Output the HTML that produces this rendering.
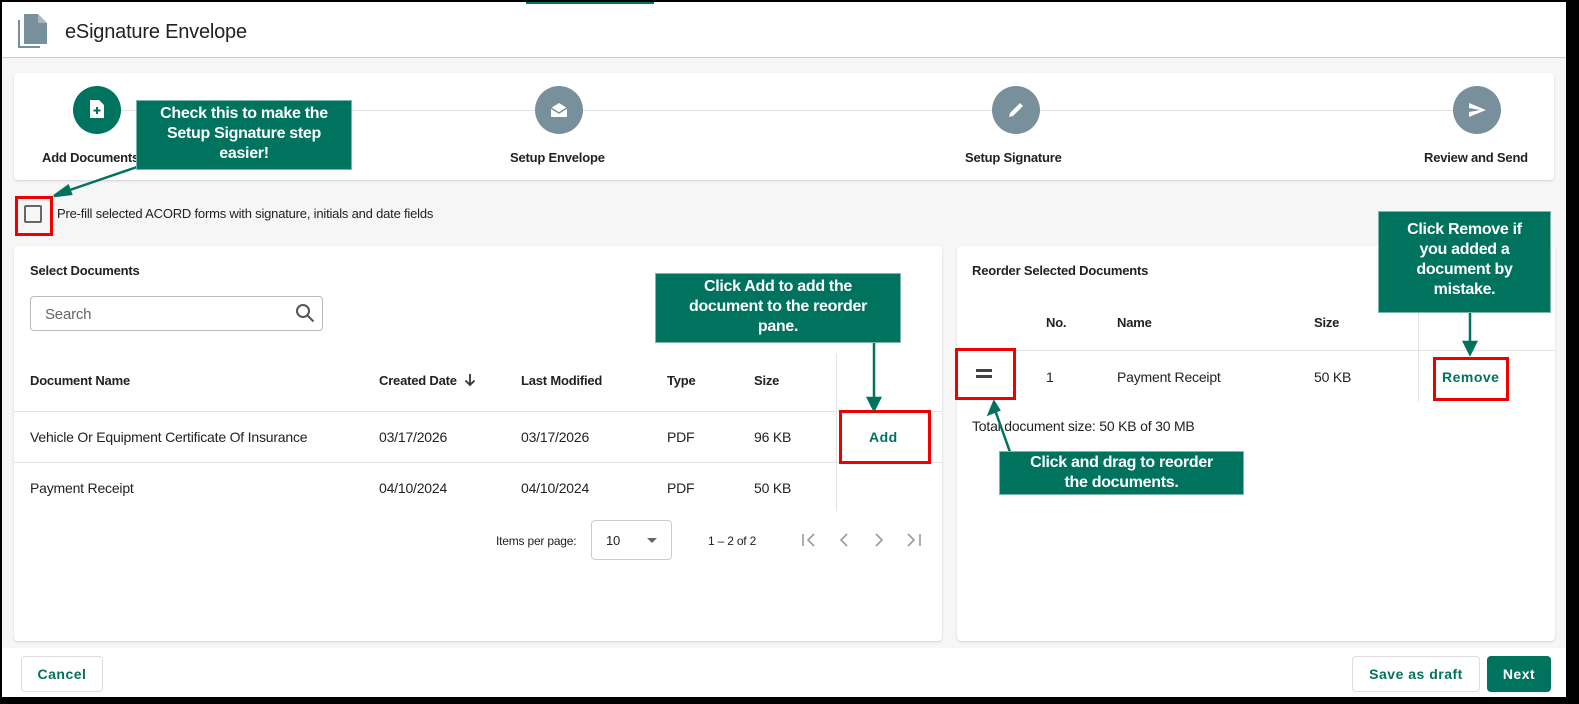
<!DOCTYPE html>
<html><head><meta charset="utf-8"><style>
*{box-sizing:border-box;margin:0;padding:0}
body{width:1579px;height:704px;overflow:hidden;font-family:"Liberation Sans",sans-serif;background:#000;position:relative;color:#222}
.a{position:absolute}
.frame{left:2px;top:2px;width:1564px;height:695px;background:#f6f6f6;overflow:hidden}
.card{background:#fff;border-radius:4px;box-shadow:0 1px 2px rgba(0,0,0,.15)}
.t{position:absolute;font-size:14px;white-space:nowrap;letter-spacing:-.2px}
.b{font-weight:bold;font-size:13px}
.call{position:absolute;background:#00735f;color:#fff;font-weight:bold;text-align:center;font-size:16px;line-height:20px;border:1px solid #7fb5ab;letter-spacing:-.3px}
.red{position:absolute;border:3px solid #e00}
.circ{position:absolute;width:48px;height:48px;border-radius:50%;background:#78909c}
.btn{position:absolute;border:1px solid #ddd;border-radius:4px;background:#fff;color:#00735f;font-weight:bold;font-size:14px;text-align:center;letter-spacing:.5px}
.hl{position:absolute;height:1px;background:#e4e4e4}
</style></head><body>
<div class="a frame">
 <div class="a" style="left:0;top:0;width:1564px;height:56px;background:#fff;border-bottom:1px solid #ccc"></div>
 <div class="a" style="left:524px;top:0;width:128px;height:2px;background:#00735f"></div>
 <svg class="a" style="left:14px;top:10px" width="34" height="38" viewBox="0 0 34 38"><path d="M2 8v28h22v-2H4V8z" fill="#78909c"/><path d="M8 2h14l9 9v21H8z" fill="#78909c"/><path d="M22 2v9h9" fill="#a9b7be"/></svg>
 <div class="t" style="left:63px;top:19px;font-size:20px;color:#222">eSignature Envelope</div>

 <div class="a card" style="left:12px;top:71px;width:1540px;height:107px"></div>
 <div class="hl" style="left:100px;top:108px;width:1400px;background:#ddd"></div>
 <div class="circ" style="left:71px;top:84px;background:#00735f"></div>
 <svg class="a" style="left:87px;top:97px" width="16" height="20" viewBox="0 0 16 20"><path d="M1 1h9l5 5v13H1z" fill="#fff"/><path d="M8 8v7M4.5 11.5h7" stroke="#00735f" stroke-width="2"/></svg>
 <div class="circ" style="left:533px;top:84px"></div>
 <svg class="a" style="left:547px;top:98px" width="20" height="20" viewBox="0 0 20 20"><path d="M2 8l8-5 8 5v9H2z" fill="#fff"/><path d="M2 8l8 5 8-5" stroke="#78909c" stroke-width="1.5" fill="none"/></svg>
 <div class="circ" style="left:990px;top:84px"></div>
 <svg class="a" style="left:1004px;top:98px" width="20" height="20" viewBox="0 0 20 20"><path d="M3 17l1-4 10-10 3 3-10 10z" fill="#fff"/></svg>
 <div class="circ" style="left:1451px;top:84px"></div>
 <svg class="a" style="left:1465px;top:98px" width="20" height="20" viewBox="0 0 20 20"><path d="M2 3l17 7-17 7 0-5 11-2-11-2z" fill="#fff"/></svg>
 <div class="t b" style="left:40px;top:148px">Add Documents</div>
 <div class="t b" style="left:508px;top:148px">Setup Envelope</div>
 <div class="t b" style="left:963px;top:148px">Setup Signature</div>
 <div class="t b" style="left:1422px;top:148px">Review and Send</div>

 <div class="a" style="left:22px;top:203px;width:18px;height:18px;border:2px solid #666;border-radius:2px"></div>
 <div class="t" style="left:55px;top:204px;font-size:13px">Pre-fill selected ACORD forms with signature, initials and date fields</div>

 <div class="a card" style="left:12px;top:244px;width:928px;height:395px"></div>
 <div class="t b" style="left:28px;top:261px">Select Documents</div>
 <div class="a" style="left:28px;top:294px;width:293px;height:35px;border:1px solid #bbb;border-radius:4px"></div>
 <div class="t" style="left:43px;top:304px;color:#666;font-size:15px">Search</div>
 <svg class="a" style="left:293px;top:301px" width="20" height="20" viewBox="0 0 20 20"><circle cx="8" cy="8" r="6" stroke="#555" stroke-width="2" fill="none"/><path d="M12.5 12.5l6 6" stroke="#555" stroke-width="2"/></svg>
 <div class="t b" style="left:28px;top:371px">Document Name</div>
 <div class="t b" style="left:377px;top:371px">Created Date</div>
 <svg class="a" style="left:462px;top:371px" width="12" height="14" viewBox="0 0 12 14"><path d="M6 1v11M1.5 7.5L6 12l4.5-4.5" stroke="#333" stroke-width="1.8" fill="none"/></svg>
 <div class="t b" style="left:519px;top:371px">Last Modified</div>
 <div class="t b" style="left:665px;top:371px">Type</div>
 <div class="t b" style="left:752px;top:371px">Size</div>
 <div class="a" style="left:834px;top:352px;width:1px;height:157px;background:#e4e4e4"></div>
 <div class="hl" style="left:12px;top:409px;width:928px"></div>
 <div class="hl" style="left:12px;top:460px;width:928px"></div>
 <div class="t" style="left:28px;top:427px">Vehicle Or Equipment Certificate Of Insurance</div>
 <div class="t" style="left:377px;top:427px">03/17/2026</div>
 <div class="t" style="left:519px;top:427px">03/17/2026</div>
 <div class="t" style="left:665px;top:427px">PDF</div>
 <div class="t" style="left:752px;top:427px">96 KB</div>
 <div class="t b" style="left:867px;top:427px;color:#00735f;font-size:14px;letter-spacing:.5px">Add</div>
 <div class="t" style="left:28px;top:478px">Payment Receipt</div>
 <div class="t" style="left:377px;top:478px">04/10/2024</div>
 <div class="t" style="left:519px;top:478px">04/10/2024</div>
 <div class="t" style="left:665px;top:478px">PDF</div>
 <div class="t" style="left:752px;top:478px">50 KB</div>
 <div class="t" style="left:494px;top:532px;font-size:12px">Items per page:</div>
 <div class="a" style="left:589px;top:518px;width:81px;height:40px;border:1px solid #ccc;border-radius:4px"></div>
 <div class="t" style="left:604px;top:531px;font-size:13px">10</div>
 <div class="a" style="left:645px;top:536px;border:5px solid transparent;border-top-color:#666;border-bottom:0"></div>
 <div class="t" style="left:706px;top:532px;font-size:12px">1 – 2 of 2</div>
 <svg class="a" style="left:798px;top:530px" width="128" height="16" viewBox="0 0 128 16" fill="none" stroke="#999" stroke-width="1.6"><path d="M3 2v12M14 2l-6 6 6 6"/><path d="M47 2l-6 6 6 6"/><path d="M76 2l6 6-6 6"/><path d="M108 2l6 6-6 6M120 2v12"/></svg>

 <div class="a card" style="left:955px;top:244px;width:598px;height:395px"></div>
 <div class="t b" style="left:970px;top:261px">Reorder Selected Documents</div>
 <div class="t b" style="left:1044px;top:313px">No.</div>
 <div class="t b" style="left:1115px;top:313px">Name</div>
 <div class="t b" style="left:1312px;top:313px">Size</div>
 <div class="a" style="left:1416px;top:300px;width:1px;height:100px;background:#e4e4e4"></div>
 <div class="hl" style="left:955px;top:348px;width:598px"></div>
 <div class="a" style="left:974px;top:367px;width:16px;height:3px;background:#444"></div>
 <div class="a" style="left:974px;top:373px;width:16px;height:3px;background:#444"></div>
 <div class="t" style="left:1044px;top:367px">1</div>
 <div class="t" style="left:1115px;top:367px">Payment Receipt</div>
 <div class="t" style="left:1312px;top:367px">50 KB</div>
 <div class="t b" style="left:1440px;top:367px;color:#00735f;font-size:14px;letter-spacing:.5px">Remove</div>
 <div class="t" style="left:970px;top:416px">Total document size: 50 KB of 30 MB</div>

 <div class="a" style="left:0;top:646px;width:1564px;height:50px;background:#fff"></div>
 <div class="btn" style="left:19px;top:654px;width:82px;height:36px;line-height:34px">Cancel</div>
 <div class="btn" style="left:1350px;top:654px;width:128px;height:36px;line-height:34px">Save as draft</div>
 <div class="btn" style="left:1485px;top:654px;width:64px;height:36px;line-height:34px;background:#00735f;color:#fff;border-color:#00735f">Next</div>

 <div class="red" style="left:13px;top:194px;width:38px;height:40px"></div>
 <div class="red" style="left:837px;top:408px;width:92px;height:54px"></div>
 <div class="red" style="left:953px;top:346px;width:61px;height:52px"></div>
 <div class="red" style="left:1431px;top:355px;width:76px;height:44px"></div>

 <svg class="a" style="left:0;top:0" width="1564" height="695">
  <g stroke="#00735f" stroke-width="2.5" fill="#00735f">
   <path d="M135 165L62 190" /><path d="M52 194l14-10 3 8z"/>
   <path d="M872 340V398"/><path d="M866 396h12l-6 12z"/>
   <path d="M1468 311V342"/><path d="M1462 340h12l-6 12z"/>
   <path d="M1008 450L993 408"/><path d="M987 412l10-4 -5-8z"/>
  </g>
 </svg>
 <div class="call" style="left:134px;top:98px;width:216px;height:70px;padding-top:3px">Check this to make the<br>Setup Signature step<br>easier!</div>
 <div class="call" style="left:653px;top:271px;width:246px;height:70px;padding-top:3px">Click Add to add the<br>document to the reorder<br>pane.</div>
 <div class="call" style="left:1376px;top:209px;width:173px;height:102px;padding-top:8px">Click Remove if<br>you added a<br>document by<br>mistake.</div>
 <div class="call" style="left:997px;top:449px;width:245px;height:44px;padding-top:1px">Click and drag to reorder<br>the documents.</div>
</div>
</body></html>
